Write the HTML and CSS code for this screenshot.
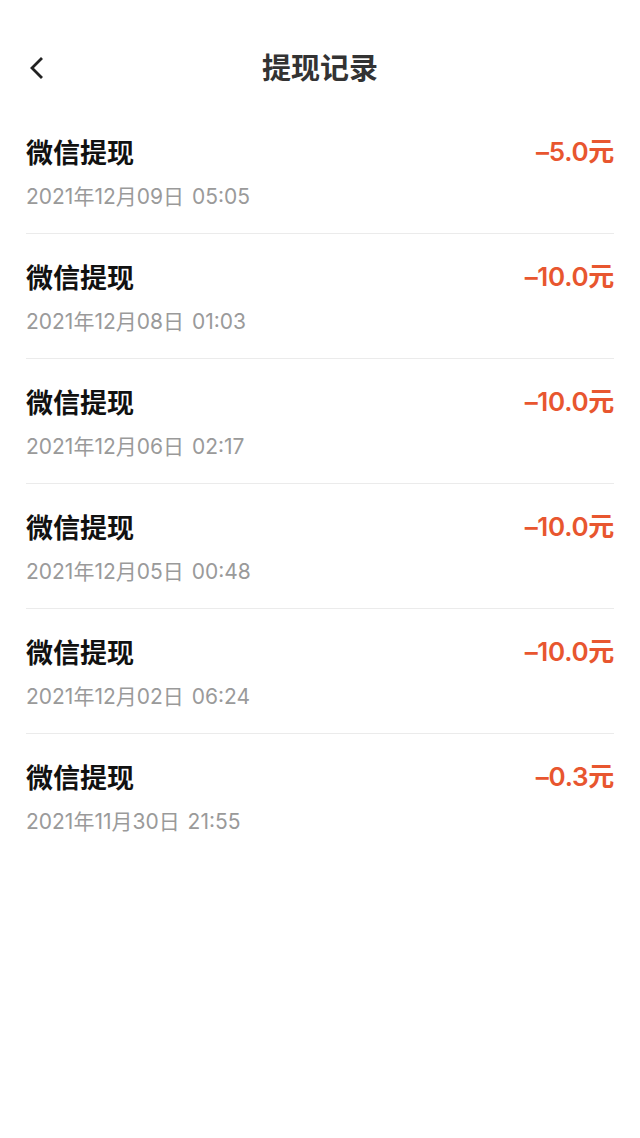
FILE: index.html
```html
<!DOCTYPE html>
<html lang="zh-CN">
<head>
<meta charset="utf-8">
<link rel="stylesheet" href="styles.css">
</head>
<body>
<div class="page">
  <header class="nav">
    <span class="back">
      <svg width="16" height="22" viewBox="0 0 16 22"><path d="M12 2 L3 11 L12 20" fill="none" stroke="#222" stroke-width="2.8" stroke-linecap="square"/></svg>
    </span>
    <h1 class="nav-title">提现记录</h1>
  </header>
  <ul class="list">
    <li class="item"><div class="row"><span class="name">微信提现</span><span class="amount">–5.0元</span></div><div class="date">2021年12月09日 05:05</div></li>
    <li class="item"><div class="row"><span class="name">微信提现</span><span class="amount">–10.0元</span></div><div class="date">2021年12月08日 01:03</div></li>
    <li class="item"><div class="row"><span class="name">微信提现</span><span class="amount">–10.0元</span></div><div class="date">2021年12月06日 02:17</div></li>
    <li class="item"><div class="row"><span class="name">微信提现</span><span class="amount">–10.0元</span></div><div class="date">2021年12月05日 00:48</div></li>
    <li class="item"><div class="row"><span class="name">微信提现</span><span class="amount">–10.0元</span></div><div class="date">2021年12月02日 06:24</div></li>
    <li class="item last"><div class="row"><span class="name">微信提现</span><span class="amount">–0.3元</span></div><div class="date">2021年11月30日 21:55</div></li>
  </ul>
</div>
</body>
</html>
```
FILE: styles.css
```css
html, body {
  margin: 0;
  padding: 0;
  background: #fff;
}
body {
  font-family: "Noto Sans CJK SC", "Noto Sans", sans-serif;
  width: 640px;
  height: 1138px;
}
.nav {
  position: relative;
  height: 109px;
  padding-top: 46px;
  box-sizing: border-box;
  text-align: center;
}
.back {
  position: absolute;
  left: 29px;
  top: 57px;
  width: 16px;
  height: 22px;
  display: block;
}
.back svg { display: block; }
.nav-title {
  margin: 0;
  font-size: 29px;
  font-weight: 700;
  color: #333;
  line-height: 40px;
}
.list {
  list-style: none;
  margin: 0 26px;
  padding: 0;
}
.item {
  height: 125px;
  box-sizing: border-box;
  border-bottom: 1.5px solid #ebebeb;
  padding-top: 24px;
}
.item.last { border-bottom: none; }
.row {
  display: flex;
  justify-content: space-between;
  align-items: center;
  height: 38px;
}
.name {
  font-size: 27px;
  font-weight: 700;
  color: #111;
  line-height: 38px;
}
.amount {
  font-family: "Inter", "Noto Sans CJK SC", sans-serif;
  font-size: 26px;
  font-weight: 600;
  color: #e8562f;
  line-height: 38px;
  letter-spacing: -0.3px;
}
.date {
  margin-top: 12px;
  font-family: "Inter", "Noto Sans CJK SC", sans-serif;
  font-size: 21px;
  color: #9a9a9a;
  line-height: 28px;
  word-spacing: 2px;
}
```
